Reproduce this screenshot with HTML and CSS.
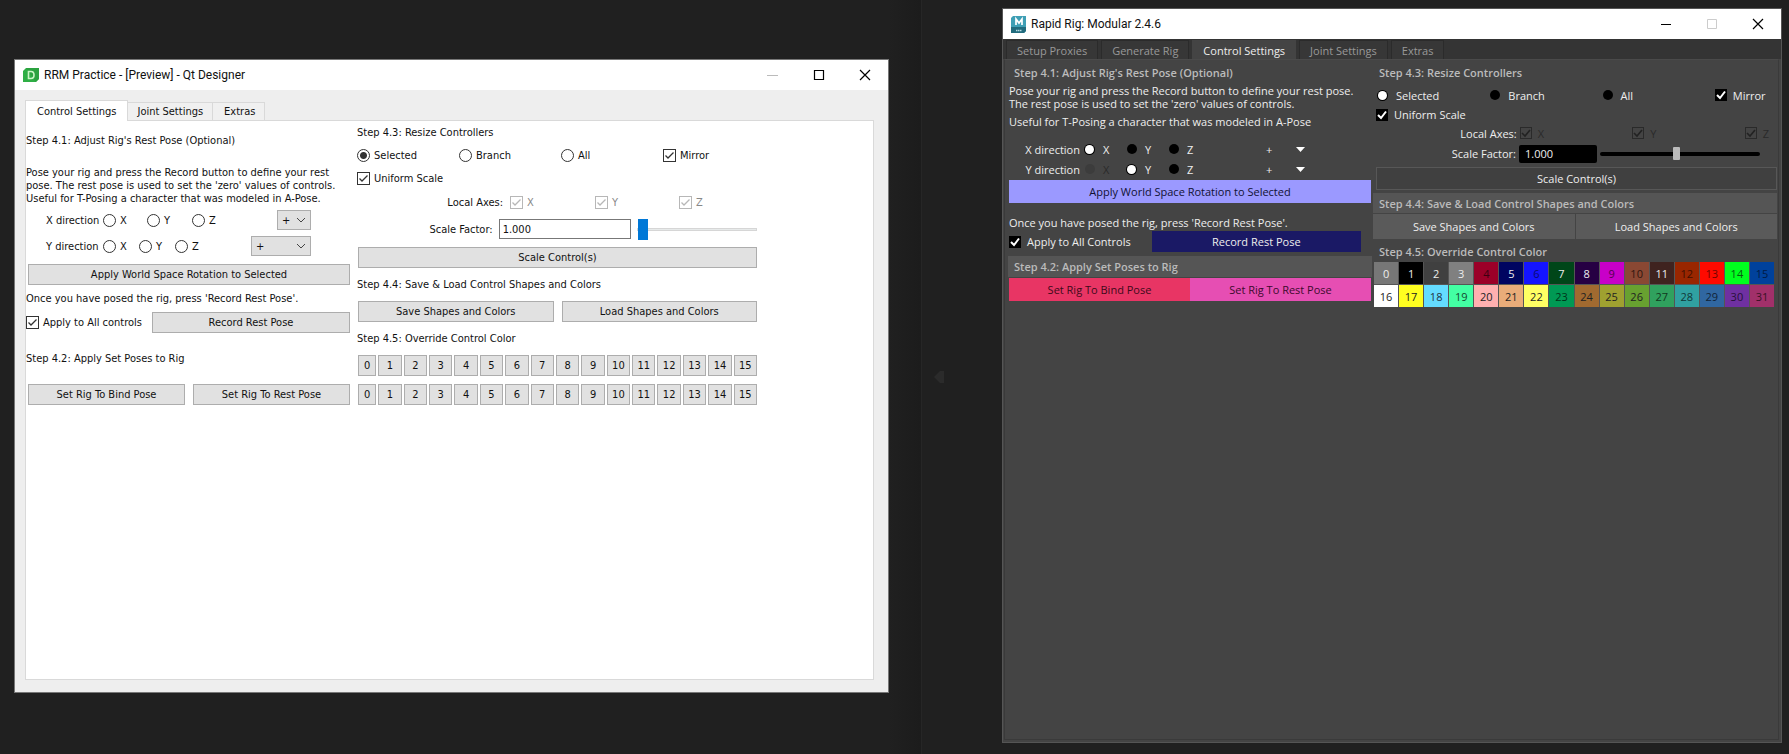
FILE: index.html
```html
<!DOCTYPE html>
<html lang="en">
<head>
<meta charset="utf-8">
<title>Rapid Rig: Modular and Qt Designer preview</title>
<link rel="stylesheet" href="styles.css">
</head>
<body>
<main class="desktop">

<section class="window qt" aria-label="RRM Practice">
  <header class="titlebar">
    <svg class="app-icon" width="16" height="14" viewBox="0 0 16 14" aria-hidden="true">
      <path d="M3 0H16V11L13 14H0V3Z" fill="#2fae45"/>
      <path d="M3 0H16V11L13 14Z" fill="#27963a" opacity=".5"/>
      <path d="M5.5 3.5H8Q11 3.5 11 7T8 10.500H5.500Z" fill="none" stroke="#c9f5c4" stroke-width="1.600"/>
    </svg>
    <h1 class="title">RRM Practice - [Preview] - Qt Designer</h1>
    <div class="caption">
      <button class="cap" aria-label="Minimize" disabled><svg width="12" height="12" viewBox="0 0 12 12"><path d="M0 6.500H11" stroke="#bbb"/></svg></button>
      <button class="cap" aria-label="Maximize"><svg width="12" height="12" viewBox="0 0 12 12"><path d="M1.500 1.500H10.500V10.500H1.500Z" fill="none" stroke="#000" stroke-width="1.200"/></svg></button>
      <button class="cap" aria-label="Close"><svg width="12" height="12" viewBox="0 0 12 12"><path d="M1 1L11 11M11 1L1 11" stroke="#000" stroke-width="1.200"/></svg></button>
    </div>
  </header>
  <div class="qt-client">
    <div class="qt-tabs" role="tablist">
      <button class="qt-tab qt-tab-on" role="tab" aria-selected="true">Control Settings</button>
      <button class="qt-tab" role="tab">Joint Settings</button>
      <button class="qt-tab" role="tab">Extras</button>
    </div>
    <div class="qt-panel">
      <div class="qt-left">
        <h2 class="qt-step first">Step 4.1: Adjust Rig's Rest Pose (Optional)</h2>
        <p class="qt-text">Pose your rig and press the Record button to define your rest<br>pose. The rest pose is used to set the 'zero' values of controls.<br>Useful for T-Posing a character that was modeled in A-Pose.</p>
        <div class="qt-dir wide">
          <span class="dir-name">X direction</span>
          <label class="opt"><input type="radio" name="qx">X</label>
          <label class="opt"><input type="radio" name="qx">Y</label>
          <label class="opt"><input type="radio" name="qx">Z</label>
          <span class="combo"><select aria-label="X direction sign"><option>+</option><option>-</option></select><svg width="10" height="6" viewBox="0 0 10 6"><path d="M1 1L5 5L9 1" fill="none" stroke="#444"/></svg></span>
        </div>
        <div class="qt-dir">
          <span class="dir-name">Y direction</span>
          <label class="opt"><input type="radio" name="qy">X</label>
          <label class="opt"><input type="radio" name="qy">Y</label>
          <label class="opt"><input type="radio" name="qy">Z</label>
          <span class="combo"><select aria-label="Y direction sign"><option>+</option><option>-</option></select><svg width="10" height="6" viewBox="0 0 10 6"><path d="M1 1L5 5L9 1" fill="none" stroke="#444"/></svg></span>
        </div>
        <button class="qbtn apply">Apply World Space Rotation to Selected</button>
        <p class="qt-once">Once you have posed the rig, press 'Record Rest Pose'.</p>
        <div class="qt-record">
          <label class="opt"><input type="checkbox" checked>Apply to All controls</label>
          <button class="qbtn">Record Rest Pose</button>
        </div>
        <h2 class="qt-step poses">Step 4.2: Apply Set Poses to Rig</h2>
        <div class="qt-pair"><button class="qbtn">Set Rig To Bind Pose</button><button class="qbtn">Set Rig To Rest Pose</button></div>
      </div>
      <div class="qt-right">
        <h2 class="qt-step resize">Step 4.3: Resize Controllers</h2>
        <div class="qt-scope">
          <label class="opt"><input type="radio" name="qs" checked>Selected</label>
          <label class="opt"><input type="radio" name="qs">Branch</label>
          <label class="opt"><input type="radio" name="qs">All</label>
          <label class="opt"><input type="checkbox" checked>Mirror</label>
        </div>
        <label class="opt qt-uniform"><input type="checkbox" checked>Uniform Scale</label>
        <div class="qt-axes">
          <span class="right">Local Axes:</span>
          <label class="opt off"><input type="checkbox" checked disabled>X</label>
          <label class="opt off"><input type="checkbox" checked disabled>Y</label>
          <label class="opt off"><input type="checkbox" checked disabled>Z</label>
        </div>
        <div class="qt-factor">
          <label class="right" for="qf">Scale Factor:</label>
          <input class="field" id="qf" type="text" value="1.000">
          <input class="slide" type="range" min="0" max="100" value="0" aria-label="Scale factor">
        </div>
        <button class="qbtn scale">Scale Control(s)</button>
        <h2 class="qt-step mid">Step 4.4: Save &amp; Load Control Shapes and Colors</h2>
        <div class="qt-pair"><button class="qbtn">Save Shapes and Colors</button><button class="qbtn">Load Shapes and Colors</button></div>
        <h2 class="qt-step mid">Step 4.5: Override Control Color</h2>
        <div class="qt-colors">
          <button class="qbtn">0</button><button class="qbtn">1</button><button class="qbtn">2</button><button class="qbtn">3</button><button class="qbtn">4</button><button class="qbtn">5</button><button class="qbtn">6</button><button class="qbtn">7</button><button class="qbtn">8</button><button class="qbtn">9</button><button class="qbtn">10</button><button class="qbtn">11</button><button class="qbtn">12</button><button class="qbtn">13</button><button class="qbtn">14</button><button class="qbtn">15</button>
          <button class="qbtn">0</button><button class="qbtn">1</button><button class="qbtn">2</button><button class="qbtn">3</button><button class="qbtn">4</button><button class="qbtn">5</button><button class="qbtn">6</button><button class="qbtn">7</button><button class="qbtn">8</button><button class="qbtn">9</button><button class="qbtn">10</button><button class="qbtn">11</button><button class="qbtn">12</button><button class="qbtn">13</button><button class="qbtn">14</button><button class="qbtn">15</button>
        </div>
      </div>
    </div>
  </div>
</section>

<div class="divider" aria-hidden="true">
  <div class="divider-edge"></div>
  <svg width="20" height="16" viewBox="0 0 20 16"><path d="M2 8L8 2L12 2V14L8 14Z" fill="#2b2b2b"/></svg>
</div>

<section class="window maya" aria-label="Rapid Rig: Modular">
  <header class="titlebar">
    <svg class="app-icon" width="15" height="17" viewBox="0 0 15 17" aria-hidden="true">
      <path d="M2 0H15V15L13 17H0V2Z" fill="#3f9fb5"/>
      <path d="M0 11H15V15L13 17H0Z" fill="#216b7d"/>
      <path d="M5 9V3L8 7L11 3V9" fill="none" stroke="#fff" stroke-width="1.700"/>
      <path d="M5 14.500H11" stroke="#b5dbe4" stroke-width="1.500" stroke-dasharray="1.500 .5"/>
    </svg>
    <h1 class="title">Rapid Rig: Modular 2.4.6</h1>
    <div class="caption">
      <button class="cap" aria-label="Minimize"><svg width="12" height="12" viewBox="0 0 12 12"><path d="M1 6.500H11" stroke="#000"/></svg></button>
      <button class="cap" aria-label="Maximize" disabled><svg width="12" height="12" viewBox="0 0 12 12"><path d="M1.500 1.500H10.500V10.500H1.500Z" fill="none" stroke="#ccc"/></svg></button>
      <button class="cap" aria-label="Close"><svg width="12" height="12" viewBox="0 0 12 12"><path d="M1 1L11 11M11 1L1 11" stroke="#000" stroke-width="1.200"/></svg></button>
    </div>
  </header>
  <div class="m-tabs" role="tablist">
    <button class="m-tab" role="tab">Setup Proxies</button>
    <button class="m-tab" role="tab">Generate Rig</button>
    <button class="m-tab m-tab-on" role="tab" aria-selected="true">Control Settings</button>
    <button class="m-tab" role="tab">Joint Settings</button>
    <button class="m-tab" role="tab">Extras</button>
  </div>
  <div class="m-panel">
    <div class="m-left">
      <h2 class="m-step">Step 4.1: Adjust Rig's Rest Pose (Optional)</h2>
      <p class="m-text">Pose your rig and press the Record button to define your rest pose.<br>The rest pose is used to set the 'zero' values of controls.</p>
      <p class="m-text useful">Useful for T-Posing a character that was modeled in A-Pose</p>
      <div class="m-dir first">
        <span class="right">X direction</span>
        <label class="opt"><input type="radio" name="mx" checked>X</label>
        <label class="opt"><input type="radio" name="mx">Y</label>
        <label class="opt"><input type="radio" name="mx">Z</label>
        <span class="m-combo"><select aria-label="X direction sign"><option>+</option><option>-</option></select><svg width="9" height="5" viewBox="0 0 9 5"><path d="M0 0H9L4.500 5Z" fill="#fff"/></svg></span>
      </div>
      <div class="m-dir">
        <span class="right">Y direction</span>
        <label class="opt off"><input type="radio" name="my" disabled>X</label>
        <label class="opt"><input type="radio" name="my" checked>Y</label>
        <label class="opt"><input type="radio" name="my">Z</label>
        <span class="m-combo"><select aria-label="Y direction sign"><option>+</option><option>-</option></select><svg width="9" height="5" viewBox="0 0 9 5"><path d="M0 0H9L4.500 5Z" fill="#fff"/></svg></span>
      </div>
      <button class="mbtn rotate">Apply World Space Rotation to Selected</button>
      <p class="m-once">Once you have posed the rig, press 'Record Rest Pose'.</p>
      <div class="m-record">
        <label class="opt"><input type="checkbox" checked>Apply to All Controls</label>
        <button class="mbtn record">Record Rest Pose</button>
      </div>
      <h2 class="m-step bar">Step 4.2: Apply Set Poses to Rig</h2>
      <div class="m-poses"><button class="mbtn bind">Set Rig To Bind Pose</button><button class="mbtn rest">Set Rig To Rest Pose</button></div>
    </div>
    <div class="m-right">
      <h2 class="m-step">Step 4.3: Resize Controllers</h2>
      <div class="m-scope">
        <label class="opt"><input type="radio" name="ms" checked>Selected</label>
        <label class="opt"><input type="radio" name="ms">Branch</label>
        <label class="opt"><input type="radio" name="ms">All</label>
        <label class="opt"><input type="checkbox" checked>Mirror</label>
      </div>
      <label class="opt m-uniform"><input type="checkbox" checked>Uniform Scale</label>
      <div class="m-axes">
        <span class="right">Local Axes:</span>
        <label class="opt off"><input type="checkbox" checked disabled>X</label>
        <label class="opt off"><input type="checkbox" checked disabled>Y</label>
        <label class="opt off"><input type="checkbox" checked disabled>Z</label>
      </div>
      <div class="m-factor">
        <label class="right" for="mf">Scale Factor:</label>
        <input class="field" id="mf" type="text" value="1.000">
        <input class="slide" type="range" min="0" max="100" value="48" aria-label="Scale factor">
      </div>
      <button class="mbtn m-scale">Scale Control(s)</button>
      <h2 class="m-step bar shapes">Step 4.4: Save &amp; Load Control Shapes and Colors</h2>
      <div class="m-files"><button class="mbtn">Save Shapes and Colors</button><button class="mbtn">Load Shapes and Colors</button></div>
      <h2 class="m-step override">Step 4.5: Override Control Color</h2>
      <div class="m-colors">
        <button class="sw c0">0</button><button class="sw c1">1</button><button class="sw c2">2</button><button class="sw c3">3</button><button class="sw c4">4</button><button class="sw c5">5</button><button class="sw c6">6</button><button class="sw c7">7</button><button class="sw c8">8</button><button class="sw c9">9</button><button class="sw c10">10</button><button class="sw c11">11</button><button class="sw c12">12</button><button class="sw c13">13</button><button class="sw c14">14</button><button class="sw c15">15</button>
        <button class="sw c16">16</button><button class="sw c17">17</button><button class="sw c18">18</button><button class="sw c19">19</button><button class="sw c20">20</button><button class="sw c21">21</button><button class="sw c22">22</button><button class="sw c23">23</button><button class="sw c24">24</button><button class="sw c25">25</button><button class="sw c26">26</button><button class="sw c27">27</button><button class="sw c28">28</button><button class="sw c29">29</button><button class="sw c30">30</button><button class="sw c31">31</button>
      </div>
    </div>
  </div>
</section>

</main>
</body>
</html>
```
FILE: styles.css
```css
* { box-sizing: border-box; }
body { margin: 0; background: #202020; }
h1, h2, p { margin: 0; font-size: inherit; font-weight: inherit; }
button, input, select { font: inherit; color: inherit; margin: 0; padding: 0; }

.desktop {
  display: grid;
  grid-template-columns: 875fr 113px 780fr;
  min-height: 100vh;
  padding: 0 7px 0 14px;
}

/* windows */
.window { display: flex; flex-direction: column; min-width: 0; border: 1px solid #777; }
.titlebar {
  display: flex; align-items: center; height: 30px; flex: none;
  background: #fff; color: #111;
  font: 12px/16px Roboto, sans-serif;
}
.app-icon { margin-left: 8px; flex: none; }
.title { flex: 1; margin-left: 5px; white-space: nowrap; }
.caption { display: flex; }
.cap { display: flex; align-items: center; justify-content: center; width: 46px; height: 30px; border: 0; background: none; }

.opt { display: flex; align-items: center; white-space: nowrap; }
.opt input { appearance: none; flex: none; }
.right { text-align: right; }
select { appearance: none; background: none; border: 0; width: 100%; height: 100%; }
.slide { appearance: none; background: none; width: 100%; min-width: 0; }
.field { min-width: 0; width: 100%; }

/* Qt Designer preview */
.qt { margin: 59px 0 61px; background: #eee; color: #111; font: 11px/13px "DejaVu Sans Condensed", "DejaVu Sans", sans-serif; }
.qt-client { display: flex; flex-direction: column; flex: 1; padding: 10px 14px 12px 10px; }
.qt-tabs { display: flex; align-items: flex-end; height: 20px; }
.qt-tab { height: 18px; padding: 0 9px; border: 1px solid #d9d9d9; border-left: 0; border-bottom: 0; background: #f0f0f0; }
.qt-tab:last-child { padding: 0 9px 0 11px; }
.qt-tab-on { height: 21px; padding: 0 11px; border-left: 1px solid #d9d9d9; background: #fff; margin-bottom: -1px; position: relative; }
.qt-panel {
  display: grid; grid-template-columns: minmax(0, 324fr) minmax(0, 400fr) minmax(0, 109fr); column-gap: 7px;
  flex: 1; align-items: start;
  background: #fff; border: 1px solid #d9d9d9;
}
.qt-step { display: flex; align-items: center; }
.qt-step.first { height: 39px; }
.qt-step.poses { height: 51px; }
.qt-step.resize { height: 22px; }
.qt-step.mid { height: 33px; }
.qt-text { margin-top: 6px; white-space: nowrap; }
.qt .opt input { width: 13px; height: 13px; margin-right: 4px; border: 1px solid #333; background: #fff; }
.qt .opt input[type="radio"] { border-radius: 50%; }
.qt .opt input[type="radio"]:checked { background: radial-gradient(circle, #333 0 3px, #fff 4px); }
.qt .opt input[type="checkbox"]:checked {
  background: url('data:image/svg+xml,<svg xmlns="http://www.w3.org/2000/svg" width="11" height="11"><path d="M1.500 5.500L4 8L9.500 2.500" fill="none" stroke="%23333" stroke-width="1.300"/></svg>') #fff;
}
.qt .opt.off { color: #888; }
.qt .opt.off input { opacity: .35; }
.qbtn { height: 21px; border: 1px solid #adadad; background: #e1e1e1; text-align: center; white-space: nowrap; }
.qt-dir { display: grid; grid-template-columns: 57px 36px 36px 1fr 60px; align-items: center; height: 20px; margin: 6px 39px 0 20px; }
.qt-dir.wide { grid-template-columns: 57px 44px 45px 1fr 34px; margin-top: 5px; }
.combo { display: flex; align-items: center; height: 20px; padding: 0 4px; border: 1px solid #adadad; background: #e1e1e1; }
.combo svg { flex: none; }
.apply { width: calc(100% - 2px); margin: 8px 0 0 2px; }
.qt-once { margin-top: 7px; }
.qt-record { display: grid; grid-template-columns: 126px 1fr; align-items: center; margin-top: 7px; }
.qt-pair { display: grid; grid-template-columns: 1fr 1fr; gap: 8px; margin-left: 2px; }
.qt-scope { display: grid; grid-template-columns: 102fr 102fr 102fr 94fr; height: 24px; align-items: center; }
.qt-uniform { height: 22px; }
.qt-axes { display: grid; grid-template-columns: 146fr 78fr 77fr 78fr; column-gap: 7px; height: 27px; align-items: center; }
.qt-factor { display: grid; grid-template-columns: 136fr 133fr 120fr; column-gap: 6px; height: 22px; margin-top: 2px; align-items: center; }
.qt .field { height: 20px; padding: 0 3px; border: 1px solid #777; background: #fff; }
.qt .slide { height: 21px; }
.qt .slide::-webkit-slider-runnable-track { height: 3px; border: 1px solid #d6d6d6; background: #e7eaea; }
.qt .slide::-webkit-slider-thumb { appearance: none; width: 10px; height: 21px; margin-top: -10px; background: #0078d7; }
.scale { width: calc(100% - 1px); margin: 7px 0 0 1px; }
.qt-right .qt-pair { margin-left: 1px; }
.qt-colors { display: grid; grid-template-columns: 18fr repeat(15, 23fr); gap: 8px 2px; margin-left: 1px; }

/* faint panel divider between the windows */
.divider { display: grid; grid-template-columns: 33px 1fr; align-items: center; }
.divider-edge { height: 100%; background: linear-gradient(90deg, #202020, #1c1c1c); border-right: 1px solid #262626; }
.divider svg { margin-left: 10px; }

/* Rapid Rig window */
.maya { margin: 8px 0 11px; border-color: #555; background: #444; color: #eee; font: 11px/13px "Open Sans", "Noto Sans", sans-serif; }
.m-tabs { display: flex; align-items: stretch; gap: 3px; height: 20px; padding: 1px 3px 0; background: #343434; }
.m-tab { padding: 0 10px; border: 1px solid #2b2b2b; border-bottom: 0; background: #373737; color: #999; white-space: nowrap; }
.m-tab-on { border-color: #444; background: #444; color: #eee; }
.m-panel {
  display: grid; grid-template-columns: minmax(0, 364fr) minmax(0, 404fr); column-gap: 1px;
  flex: 1; align-items: start; margin: 0 2px 2px 1px; padding: 2px 1px 0 3px;
  border: 1px solid #3a3a3a; border-top-color: #4a4a4a;
}
.m-step { display: flex; align-items: center; height: 20px; padding-left: 6px; color: #bbb; font-weight: 600; white-space: nowrap; }
.m-step.bar { height: 21px; margin-top: 4px; background: #555; }
.m-step.bar.shapes { height: 20px; margin-top: 3px; }
.m-text { margin-top: 2px; padding-left: 1px; white-space: nowrap; }
.m-text.useful { margin-top: 5px; }
.maya .opt input { width: 12px; height: 12px; margin-right: 6px; background: #000; border: 0; }
.maya .opt input[type="radio"] { width: 10px; height: 10px; margin-right: 8px; border-radius: 50%; }
.maya .opt input[type="radio"]:checked { background: #fff; box-shadow: 0 0 0 1px #000; width: 9px; height: 9px; margin-right: 9px; }
.maya .opt input[type="checkbox"]:checked {
  background: url('data:image/svg+xml,<svg xmlns="http://www.w3.org/2000/svg" width="12" height="12"><path d="M2 6L5 9L10 2.500" fill="none" stroke="white" stroke-width="2"/></svg>') #000;
}
.maya .opt.off { color: #2a2a2a; }
.maya .opt.off input[type="radio"] { background: #3c3c3c; }
.maya .opt.off input[type="checkbox"]:checked {
  border: 1px solid #2a2a2a;
  background: url('data:image/svg+xml,<svg xmlns="http://www.w3.org/2000/svg" width="10" height="10"><path d="M1 5L4 8L9 2" fill="none" stroke="%23222" stroke-width="1.600"/></svg>') #444;
}
.m-dir { display: grid; grid-template-columns: 72px 37px 37px 1fr 86px; column-gap: 5px; height: 20px; align-items: center; padding-right: 20px; }
.m-dir.first { margin-top: 11px; }
.m-combo { display: flex; align-items: center; height: 18px; padding-right: 47px; }
.m-combo svg { flex: none; }
.mbtn { height: 23px; border: 0; text-align: center; white-space: nowrap; background: #5a5a5a; }
.rotate { width: calc(100% - 2px); margin: 1px 1px 0; background: #9b99ff; color: #111133; }
.m-once { margin-top: 13px; padding-left: 1px; }
.m-record { display: grid; grid-template-columns: 143fr 210fr 11fr; align-items: center; margin-top: 2px; padding-left: 1px; }
.record { height: 21px; background: #1a1965; }
.m-poses { display: grid; grid-template-columns: 1fr 1fr; margin: 1px 1px 0; }
.bind { background: #e83564; color: #3d0a1a; }
.rest { background: #e64eb3; color: #3d0a2d; }
.m-scope { display: grid; grid-template-columns: 112fr 112fr 112fr 62fr; height: 20px; margin-top: 3px; padding-left: 5px; align-items: center; }
.m-uniform { height: 19px; padding-left: 3px; }
.m-axes { display: grid; grid-template-columns: 143fr 109fr 109fr 32fr; column-gap: 3px; height: 18px; align-items: center; }
.m-factor { display: grid; grid-template-columns: 143fr 78fr 160fr; column-gap: 3px; height: 19px; align-items: center; margin-top: 2px; padding-right: 17px; }
.maya .field { height: 18px; padding: 0 6px; border: 0; border-radius: 2px; background: #000; }
.maya .slide { height: 14px; }
.maya .slide::-webkit-slider-runnable-track { height: 4px; border-radius: 2px; background: #000; }
.maya .slide::-webkit-slider-thumb { appearance: none; width: 7px; height: 13px; margin-top: -5px; border-radius: 1px; background: #bbb; }
.m-scale { width: calc(100% - 3px); margin: 4px 0 0 3px; border: 1px solid #575757; background: #404040; }
.m-files { display: grid; grid-template-columns: 1fr 1fr; gap: 1px; margin-top: 1px; }
.m-files .mbtn { height: 25px; }
.m-step.override { margin-top: 2px; }
.m-colors { display: grid; grid-template-columns: repeat(16, 1fr); gap: 1px; margin: 1px 3px 0 1px; background: #555; }
.sw { height: 22px; border: 0; text-align: center; color: #222; }
.c0 { background: #777; color: #eee; }
.c1 { background: #000; color: #eee; }
.c2 { background: #404040; color: #eee; }
.c3 { background: #808080; color: #eee; }
.c4 { background: #9b0028; color: #3b0010; }
.c5 { background: #000460; color: #eee; }
.c6 { background: #1414ff; color: #0a0a70; }
.c7 { background: #004619; color: #eee; }
.c8 { background: #260043; color: #eee; }
.c9 { background: #c800c8; color: #500050; }
.c10 { background: #8a4833; color: #30160f; }
.c11 { background: #3f231f; color: #eee; }
.c12 { background: #992600; color: #400f00; }
.c13 { background: #ff0a00; color: #700500; }
.c14 { background: #00ff1e; color: #0a5a10; }
.c15 { background: #00419b; color: #001b45; }
.c16 { background: #fff; }
.c17 { background: #ffff20; }
.c18 { background: #64dcff; color: #234; }
.c19 { background: #43ffa3; color: #154a30; }
.c20 { background: #ffb0b0; }
.c21 { background: #e9ac79; }
.c22 { background: #ffff63; }
.c23 { background: #009954; color: #003319; }
.c24 { background: #a16a30; }
.c25 { background: #9fa130; }
.c26 { background: #68a130; }
.c27 { background: #30a15e; color: #103820; }
.c28 { background: #30a1a1; color: #103838; }
.c29 { background: #3067a1; color: #102338; }
.c30 { background: #6f30a1; color: #271038; }
.c31 { background: #a1306a; color: #381025; }
```
